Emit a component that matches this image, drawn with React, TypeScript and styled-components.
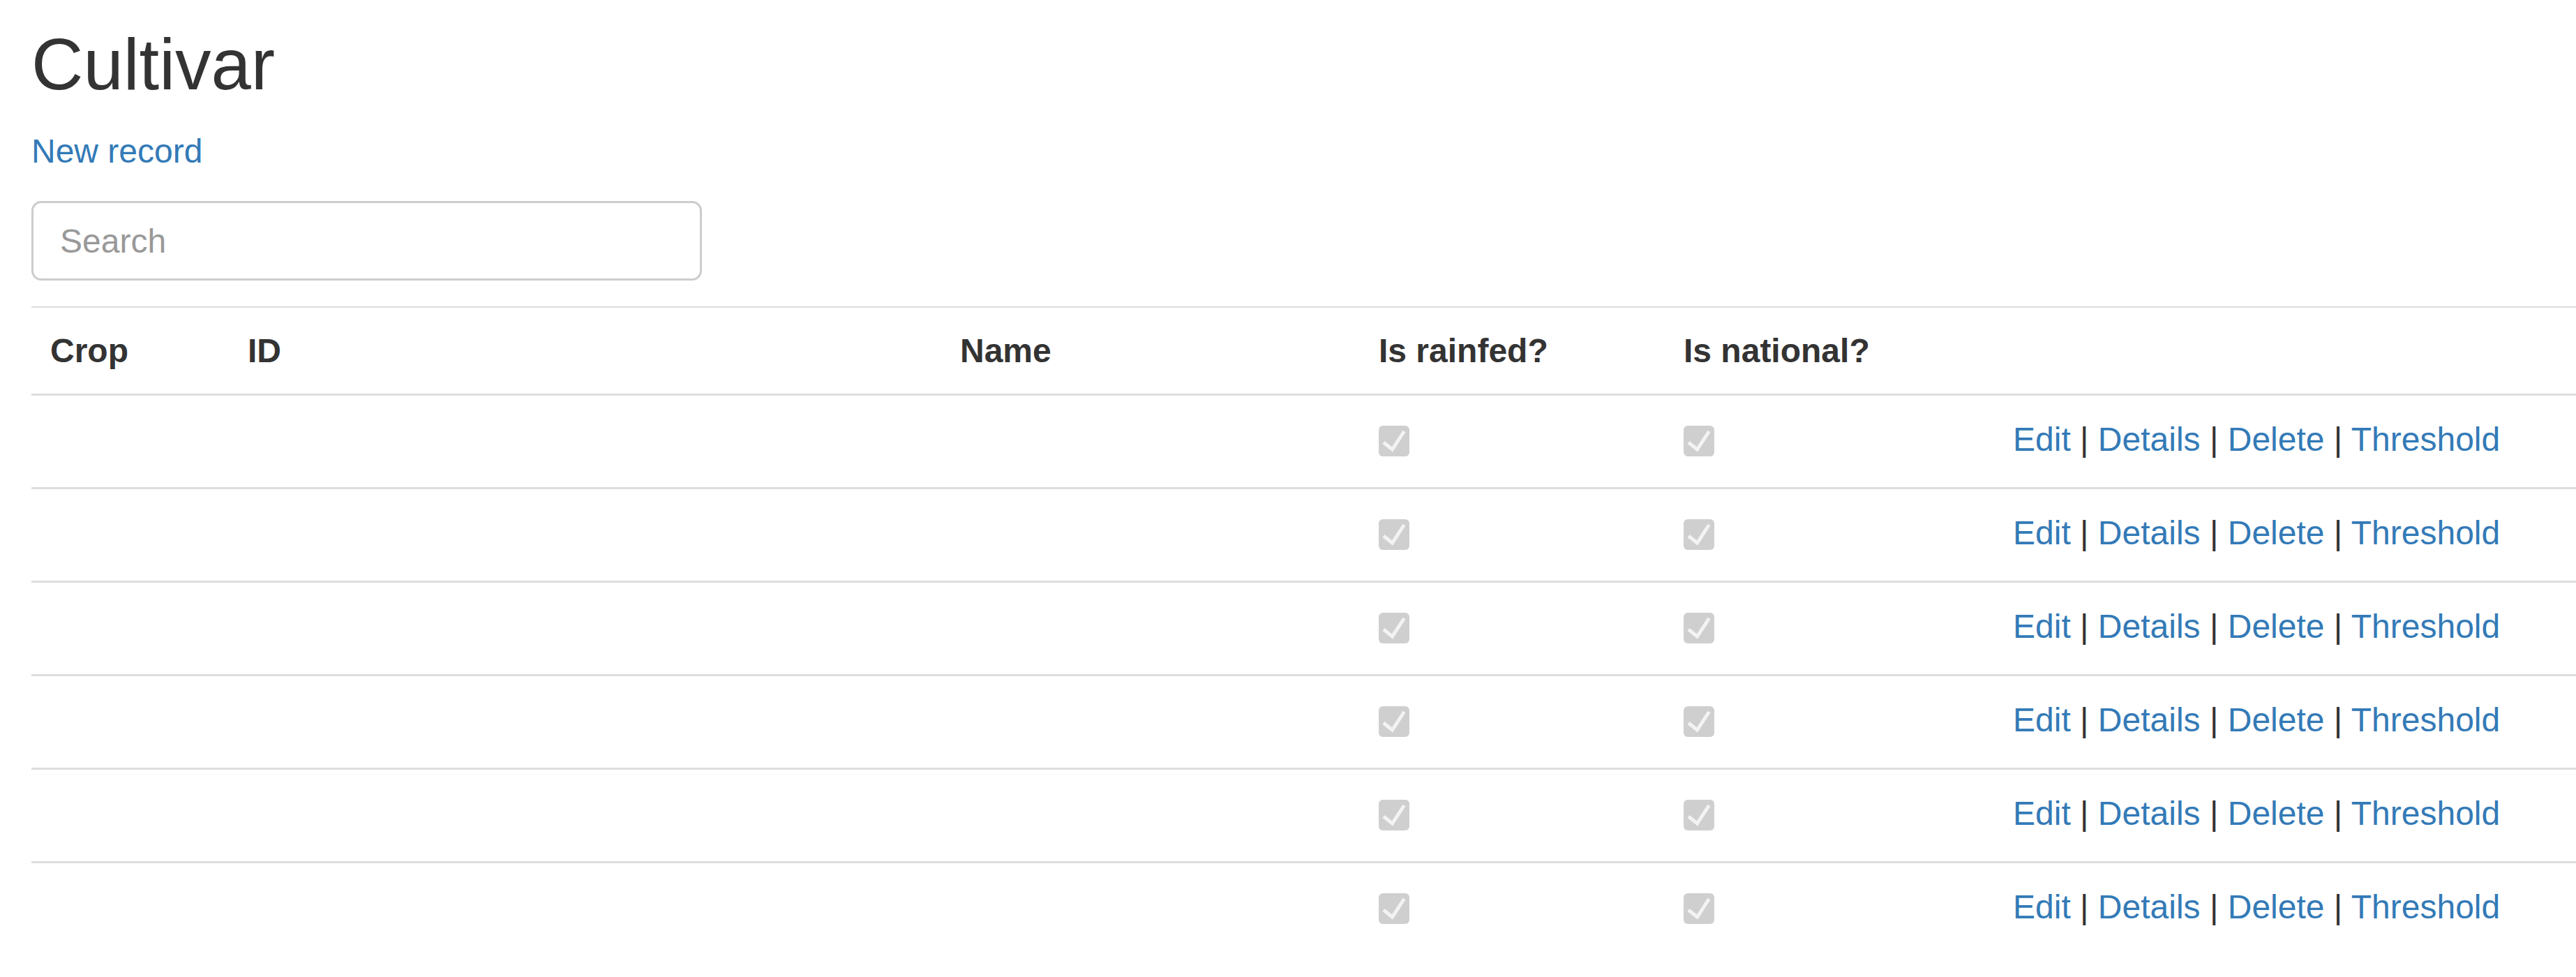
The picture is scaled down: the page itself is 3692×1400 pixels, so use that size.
import styled, { createGlobalStyle } from 'styled-components';

const GlobalStyle = createGlobalStyle`
  html, body {
    margin: 0;
    padding: 0;
    background: #fff;
  }
  body {
    font-family: "Liberation Sans", Arial, Helvetica, sans-serif;
    font-size: 48px;
    line-height: 68px;
    color: #333;
  }
`;

const Page = styled.div`
  padding: 37px 0 0 45px;
`;

const Title = styled.h2`
  margin: 0 0 34px;
  font-size: 103px;
  font-weight: 500;
  line-height: 112px;
  color: #333;
`;

const NewRecord = styled.a`
  display: block;
  margin-bottom: 37px;
  color: #337ab7;
  text-decoration: none;
`;

const SearchInput = styled.input`
  display: block;
  box-sizing: border-box;
  width: 961px;
  height: 114px;
  margin: 0 0 37px;
  padding: 0 38px;
  border: 3px solid #ccc;
  border-radius: 14px;
  font-family: inherit;
  font-size: 48px;
  color: #555;
  outline: none;

  &::placeholder {
    color: #999;
  }
`;

const Table = styled.table`
  width: 100%;
  table-layout: fixed;
  border-collapse: separate;
  border-spacing: 0;
`;

const HeadCell = styled.th<{ $w?: number }>`
  width: ${(p) => (p.$w ? `${p.$w}px` : 'auto')};
  box-sizing: border-box;
  padding: 28px 27px 27px;
  border-top: 2px solid #ddd;
  border-bottom: 3px solid #ddd;
  text-align: left;
  font-weight: 700;
  line-height: 68px;
  white-space: nowrap;
`;

const Row = styled.tr`
  &:not(:last-child) td {
    border-bottom: 3px solid #ddd;
  }
`;

const Cell = styled.td`
  padding: 29px 27px 34px;
  line-height: 68px;
  vertical-align: top;
  white-space: nowrap;
`;

const CheckBox = styled.svg`
  display: block;
  width: 44px;
  height: 44px;
  margin-top: 14px;
`;

const ActionLink = styled.a`
  color: #337ab7;
  text-decoration: none;
`;

const Sep = styled.span`
  color: #333;
`;

function Check() {
  return (
    <CheckBox viewBox="0 0 44 44">
      <rect x="0" y="0" width="44" height="44" rx="6" fill="#cfcfcf" />
      <polyline
        points="7,24 19.5,34 36.5,8"
        fill="none"
        stroke="#f3f3f3"
        strokeWidth="5"
      />
    </CheckBox>
  );
}

const rows = [
  { crop: '', id: '', name: '', rainfed: true, national: true },
  { crop: '', id: '', name: '', rainfed: true, national: true },
  { crop: '', id: '', name: '', rainfed: true, national: true },
  { crop: '', id: '', name: '', rainfed: true, national: true },
  { crop: '', id: '', name: '', rainfed: true, national: true },
  { crop: '', id: '', name: '', rainfed: true, national: true },
];

const actions = ['Edit', 'Details', 'Delete', 'Threshold'];

export default function App() {
  return (
    <>
      <GlobalStyle />
      <Page>
        <Title>Cultivar</Title>
        <NewRecord href="#">New record</NewRecord>
        <SearchInput type="text" placeholder="Search" />
        <Table>
          <thead>
            <tr>
              <HeadCell $w={283}>Crop</HeadCell>
              <HeadCell $w={1021}>ID</HeadCell>
              <HeadCell $w={600}>Name</HeadCell>
              <HeadCell $w={437}>Is rainfed?</HeadCell>
              <HeadCell $w={472}>Is national?</HeadCell>
              <HeadCell />
            </tr>
          </thead>
          <tbody>
            {rows.map((r, i) => (
              <Row key={i}>
                <Cell>{r.crop}</Cell>
                <Cell>{r.id}</Cell>
                <Cell>{r.name}</Cell>
                <Cell>{r.rainfed && <Check />}</Cell>
                <Cell>{r.national && <Check />}</Cell>
                <Cell>
                  {actions.map((a, j) => (
                    <span key={a}>
                      {j > 0 && <Sep> | </Sep>}
                      <ActionLink href="#">{a}</ActionLink>
                    </span>
                  ))}
                </Cell>
              </Row>
            ))}
          </tbody>
        </Table>
      </Page>
    </>
  );
}
